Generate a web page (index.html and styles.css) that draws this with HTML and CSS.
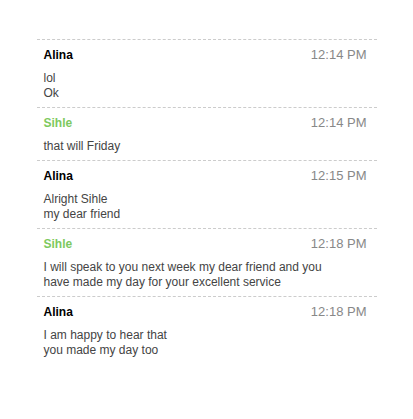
FILE: index.html
```html
<!DOCTYPE html>
<html>
<head>
  <meta charset="UTF-8">
  <title>Chat log</title>
  <link rel="stylesheet" href="styles.css">
</head>
<body>

  <!-- Conversation -->
  <div class="chat">
    <div class="entry">
      <div class="entry-head">
        <span class="name">Alina</span>
        <span class="time">12:14 PM</span>
      </div>
      <p class="msg">lol</p>
      <p class="msg">Ok</p>
    </div>

    <div class="entry">
      <div class="entry-head">
        <span class="name other">Sihle</span>
        <span class="time">12:14 PM</span>
      </div>
      <p class="msg">that will Friday</p>
    </div>

    <div class="entry">
      <div class="entry-head">
        <span class="name">Alina</span>
        <span class="time">12:15 PM</span>
      </div>
      <p class="msg">Alright Sihle<br>my dear friend</p>
    </div>

    <div class="entry">
      <div class="entry-head">
        <span class="name other">Sihle</span>
        <span class="time">12:18 PM</span>
      </div>
      <p class="msg">I will speak to you next week my dear friend and you<br>have made my day for your excellent service</p>
    </div>

    <div class="entry last">
      <div class="entry-head">
        <span class="name">Alina</span>
        <span class="time">12:18 PM</span>
      </div>
      <p class="msg">I am happy to hear that<br>you made my day too</p>
    </div>
  </div>

</body>
</html>
```

FILE: styles.css
```css
* {
  box-sizing: border-box;
}

body, html {
  margin: 0;
  padding: 0;
  background: #fff;
  font-family: "Liberation Sans", Arial, sans-serif;
}

/* Centered list */
.chat {
  width: 340px;
  margin: 39px auto 0;
}

.entry {
  border-top: 1px dashed #ccc;
  padding: 7px 10px 6px 7px;
}

.entry-head {
  display: flex;
  justify-content: space-between;
  align-items: baseline;
  line-height: 16px;
  margin-bottom: 8px;
}

.name {
  font-size: 12px;
  font-weight: bold;
  color: #000;
}

.name.other {
  color: #7dc95e;
}

.time {
  font-size: 13px;
  color: #888;
}

.msg {
  margin: 0;
  font-size: 12px;
  line-height: 15px;
  color: #444;
}
```
